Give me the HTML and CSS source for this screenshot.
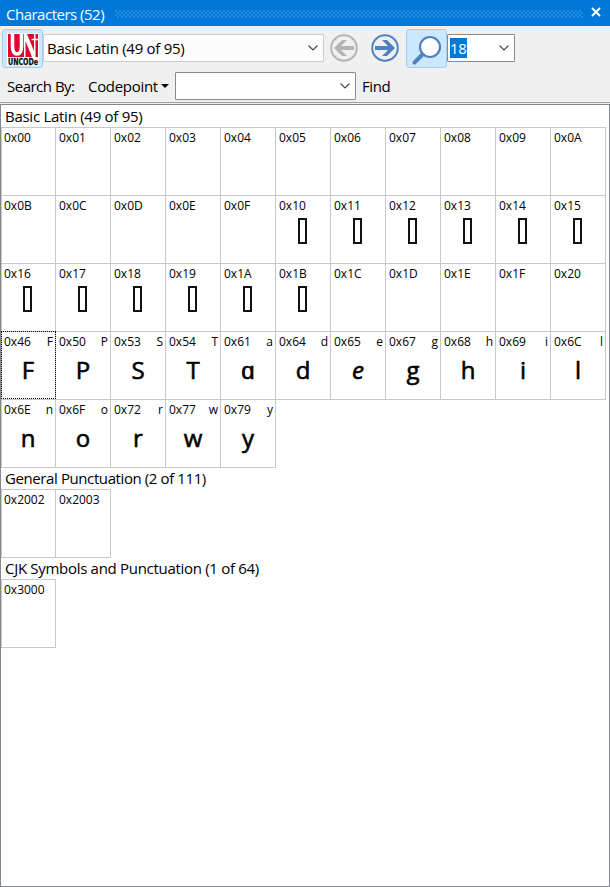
FILE: index.html
```
<!DOCTYPE html>
<html lang="en">
<head>
<meta charset="utf-8">
<title>Characters</title>
<link rel="stylesheet" href="styles.css">
</head>
<body>
<div class="panel">
  <header class="titlebar">
    <span class="title">Characters (52)</span>
    <span class="grip"></span>
    <svg class="close" width="10" height="10" viewBox="0 0 10 10"><path d="M1 1 9 9M9 1 1 9" stroke="#fff" stroke-width="1.8"/></svg>
  </header>
  <div class="toolbar">
    <div class="tools">
      <div class="tool on logo">
        <svg width="34" height="34" viewBox="0 0 34 34">
          <rect x="0" y="0" width="32" height="33" fill="#fff"/>
          <rect x="1" y="1" width="30" height="23" fill="#e2062c"/>
          <path d="M5.500 1v12q0 8 4.500 8t4.500-8V1" fill="none" stroke="#fff" stroke-width="3.600"/>
          <path d="M17 1h3l7 17V1h1.500v23H25L18.500 8v16H17z" fill="#fff"/>
          <path d="M24.500 6.500H31" stroke="#fff" stroke-width="1.500"/>
          <text x="1" y="31.500" class="logo-word" textLength="30" lengthAdjust="spacingAndGlyphs">UNCODe</text>
        </svg>
      </div>
      <div class="combo block"><span>Basic Latin (49 of 95)</span><svg class="chev" width="10" height="6" viewBox="0 0 10 6"><path d="M.5.5 5 5 9.500.5"/></svg></div>
      <svg class="arrow back" width="28" height="28" viewBox="0 0 28 28"><circle cx="14" cy="14" r="12.800"/><path d="M24 12v4H11l6 6h-5L4 14l8-8h5l-6 6z"/></svg>
      <svg class="arrow next" width="28" height="28" viewBox="0 0 28 28"><circle cx="14" cy="14" r="12.800"/><path d="M4 12v4h13l-6 6h5l8-8-8-8h-5l6 6z"/></svg>
      <div class="tool on search">
        <svg width="30" height="30" viewBox="0 0 30 30"><path d="M2.500 27.500 11 19" stroke="#4d82bc" stroke-width="4" stroke-linecap="round"/><circle cx="18" cy="12" r="10" fill="#fff" stroke="#4d82bc" stroke-width="2.200"/></svg>
      </div>
      <div class="combo size"><span class="sel">18</span><svg class="chev" width="10" height="6" viewBox="0 0 10 6"><path d="M.5.5 5 5 9.500.5"/></svg></div>
    </div>
    <div class="searchrow">
      <span class="by">Search By:</span>
      <span class="code">Codepoint</span>
      <span class="drop"></span>
      <div class="combo query"><svg class="chev" width="10" height="6" viewBox="0 0 10 6"><path d="M.5.5 5 5 9.500.5"/></svg></div>
      <span class="find">Find</span>
    </div>
  </div>
  <main class="list">
    <h2 class="first">Basic Latin (49 of 95)</h2>
    <div class="grid">
      <div class="cell">0x00</div><div class="cell">0x01</div><div class="cell">0x02</div><div class="cell">0x03</div><div class="cell">0x04</div><div class="cell">0x05</div><div class="cell">0x06</div><div class="cell">0x07</div><div class="cell">0x08</div><div class="cell">0x09</div><div class="cell">0x0A</div>
      <div class="cell">0x0B</div><div class="cell">0x0C</div><div class="cell">0x0D</div><div class="cell">0x0E</div><div class="cell">0x0F</div><div class="cell">0x10<i class="box"></i></div><div class="cell">0x11<i class="box"></i></div><div class="cell">0x12<i class="box"></i></div><div class="cell">0x13<i class="box"></i></div><div class="cell">0x14<i class="box"></i></div><div class="cell">0x15<i class="box"></i></div>
      <div class="cell">0x16<i class="box"></i></div><div class="cell">0x17<i class="box"></i></div><div class="cell">0x18<i class="box"></i></div><div class="cell">0x19<i class="box"></i></div><div class="cell">0x1A<i class="box"></i></div><div class="cell">0x1B<i class="box"></i></div><div class="cell">0x1C</div><div class="cell">0x1D</div><div class="cell">0x1E</div><div class="cell">0x1F</div><div class="cell">0x20</div>
      <div class="cell focus">0x46<b>F</b><em>F</em></div><div class="cell">0x50<b>P</b><em>P</em></div><div class="cell">0x53<b>S</b><em>S</em></div><div class="cell">0x54<b>T</b><em>T</em></div><div class="cell">0x61<b>a</b><em>ɑ</em></div><div class="cell">0x64<b>d</b><em>d</em></div><div class="cell">0x65<b>e</b><em class="slant">e</em></div><div class="cell">0x67<b>g</b><em>g</em></div><div class="cell">0x68<b>h</b><em>h</em></div><div class="cell">0x69<b>i</b><em>i</em></div><div class="cell">0x6C<b>l</b><em>l</em></div>
      <div class="cell">0x6E<b>n</b><em>n</em></div><div class="cell">0x6F<b>o</b><em>o</em></div><div class="cell">0x72<b>r</b><em>r</em></div><div class="cell">0x77<b>w</b><em>w</em></div><div class="cell">0x79<b>y</b><em>y</em></div>
    </div>
    <h2 class="punct">General Punctuation (2 of 111)</h2>
    <div class="grid"><div class="cell">0x2002</div><div class="cell">0x2003</div></div>
    <h2>CJK Symbols and Punctuation (1 of 64)</h2>
    <div class="grid"><div class="cell">0x3000</div></div>
  </main>
</div>
</body>
</html>
```
FILE: styles.css
```
* { box-sizing: border-box; }
body { margin: 0; font: 15px/20px "Open Sans", "Noto Sans", sans-serif; color: #000; }
.panel { width: 610px; height: 887px; display: flex; flex-direction: column; background: #f0f0f0; overflow: hidden; }
.titlebar { height: 26px; flex: none; display: flex; align-items: center; background: #0078d7; color: #fff; padding: 0 9px 0 6px; }
.title { width: 109px; letter-spacing: -.5px; padding-top: 1px; white-space: nowrap; }
.grip { width: 468px; height: 8px; margin-top: 1px; background: radial-gradient(circle at 1px 1px, #4da3e5 .6px, transparent .8px) 0 0 / 4px 4px, radial-gradient(circle at 1px 1px, #4da3e5 .6px, transparent .8px) 2px 2px / 4px 4px; }
.close { margin-left: auto; margin-top: -2px; }
.toolbar { height: 77px; flex: none; border-bottom: 1px solid #a0a0a0; }
.tools { height: 43px; display: flex; align-items: center; padding: 2px 0 1px 2px; }
.tool { width: 41px; height: 39px; border: 1px solid #99d1ff; border-radius: 3px; background: #cce8ff; flex: none; }
.logo { padding: 3px 0 0 4px; }
.logo svg, .search svg { display: block; }
.logo svg { overflow: visible; }
.logo-word { font: bold 8px "DejaVu Sans", sans-serif; fill: #111; stroke: #111; stroke-width: .3px; }
.search { margin-left: 7px; padding: 5px 0 0 5px; }
.combo { height: 28px; border: 1px solid #8a8a8a; border-radius: 1px; background: #fff; display: flex; align-items: center; white-space: nowrap; }
.chev { margin-left: auto; fill: none; stroke: #444; stroke-width: 1.1; }
.block { width: 281px; background: #fcfcfc; border-color: #ccc; padding: 0 5px 0 3px; letter-spacing: -.27px; }
.arrow { flex: none; fill: #b4b4b4; }
.arrow circle { fill: none; stroke: #b4b4b4; stroke-width: 2; }
.back { margin-left: 6px; }
.next { margin-left: 13px; fill: #4d82bc; }
.next circle { stroke: #4d82bc; }
.size { width: 68px; padding: 0 5px 0 2px; }
.sel { width: 17px; height: 20px; line-height: 20px; margin-top: -1px; background: #0078d7; color: #fff; letter-spacing: -.3px; }
.searchrow { height: 34px; display: flex; align-items: center; padding: 0 0 0 7px; white-space: nowrap; }
.by { width: 81px; letter-spacing: -.5px; margin-top: -1px; }
.code { width: 73px; letter-spacing: -.3px; margin-top: -1px; }
.drop { border: 4px solid transparent; border-top-color: #000; border-bottom: 0; margin-right: 6px; }
.query { width: 181px; padding: 0 5px; margin-top: -1px; }
.find { margin-left: 6px; letter-spacing: -.4px; margin-top: -1px; }
.list { margin-top: 1px; flex: 1; border: 1px solid #828790; background: #fff; }
h2 { margin: 0; padding-left: 4px; height: 21px; font-size: 15px; font-weight: 400; line-height: 21px; letter-spacing: -.3px; white-space: nowrap; }
h2.first { height: 22px; line-height: 23px; letter-spacing: -.27px; }
h2.punct { letter-spacing: -.4px; }
.grid { display: grid; grid-template-columns: repeat(11, 55px); grid-auto-rows: 68px; padding-top: 1px; }
.cell { position: relative; border: solid #c8c8c8; border-width: 0 1px 1px 0; box-shadow: 0 -1px #c8c8c8; padding-left: 3px; font-size: 12px; line-height: 20px; }
.cell:nth-child(11n+1) { border-left-width: 1px; padding-left: 2px; }
.cell b { position: absolute; right: 2px; top: 0; font-weight: 400; }
.cell em { display: block; text-align: center; font: 500 24px/34px "Open Sans", sans-serif; -webkit-text-stroke: .6px #000; margin: 1px 0 0 -3px; }
.cell em.slant { font-style: italic; }
.box { display: block; width: 9px; height: 26px; border: 2px solid #111; margin: 2px 0 0 19px; }
.focus { z-index: 1; }
.focus::after { content: ""; position: absolute; inset: -1px -1px 0 -1px; border: 1px dotted #000; }
```
